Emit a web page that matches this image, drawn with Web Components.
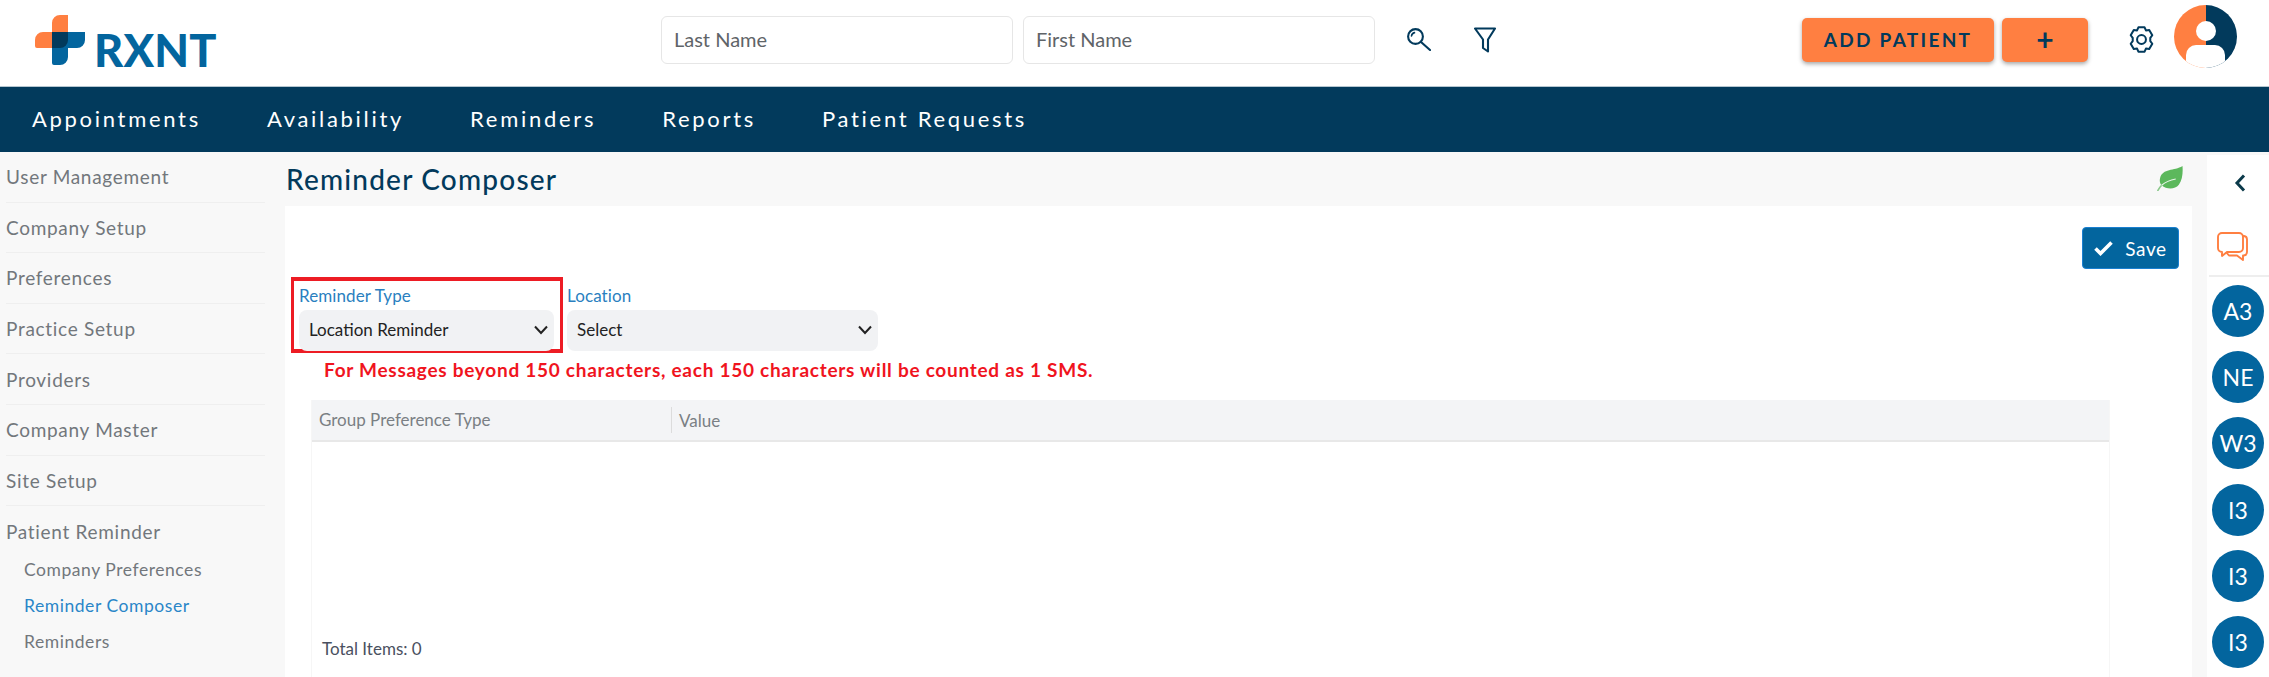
<!DOCTYPE html>
<html lang="en">
<head>
<meta charset="utf-8">
<title>Reminder Composer</title>
<style>
  html, body { margin: 0; height: 677px; overflow: hidden; background: #f8f8f8; }
  body { font-family: "Lato", "Open Sans", sans-serif; color: #333; }
</style>
</head>
<body>
<rx-header></rx-header>
<rx-nav>
  <a>Appointments</a><a>Availability</a><a>Reminders</a><a>Reports</a><a>Patient Requests</a>
</rx-nav>
<rx-workspace>
  <rx-sidebar slot="left">
    <rx-side-item>User Management</rx-side-item>
    <rx-side-item>Company Setup</rx-side-item>
    <rx-side-item>Preferences</rx-side-item>
    <rx-side-item>Practice Setup</rx-side-item>
    <rx-side-item>Providers</rx-side-item>
    <rx-side-item>Company Master</rx-side-item>
    <rx-side-item>Site Setup</rx-side-item>
    <rx-side-item last>Patient Reminder</rx-side-item>
    <rx-side-item sub>Company Preferences</rx-side-item>
    <rx-side-item sub active>Reminder Composer</rx-side-item>
    <rx-side-item sub>Reminders</rx-side-item>
  </rx-sidebar>
  <rx-composer slot="main"></rx-composer>
  <rx-rail slot="right">
    <rx-badge>A3</rx-badge>
    <rx-badge>NE</rx-badge>
    <rx-badge>W3</rx-badge>
    <rx-badge>I3</rx-badge>
    <rx-badge>I3</rx-badge>
    <rx-badge>I3</rx-badge>
  </rx-rail>
</rx-workspace>

<script>
const tplHeader = document.createElement('template');
tplHeader.innerHTML = `
  <style>
    :host { display: flex; align-items: center; height: 86px; background: #fff; box-sizing: border-box; padding: 0 0 7px 35px; }
    .logo { display: flex; align-items: flex-start; width: 626px; height: 50px; gap: 9px; }
    .logo svg { display: block; flex: none; }
    .logo b { font-size: 45px; line-height: 50px; font-weight: 900; color: #03659e; letter-spacing: .2px; margin-top: 10px; }
    input {
      width: 352px; height: 48px; box-sizing: border-box; border: 1px solid #e6e6e6; border-radius: 6px;
      padding: 0 12px 2px; font: 20px "Lato", sans-serif; color: #555; background: #fff; outline: none;
    }
    input::placeholder { color: #5f6468; opacity: 1; }
    input + input { margin-left: 10px; }
    .tool { display: block; flex: none; }
    .btn {
      display: flex; align-items: center; justify-content: center; height: 44px; box-sizing: border-box;
      background: #ff7f41; border-radius: 5px; box-shadow: 0 2px 4px rgba(0,0,0,.35);
      color: #023a5c; font-size: 19px; font-weight: 700; letter-spacing: 2.3px;
    }
    .avatar { display: block; flex: none; margin-left: 19px; margin-top: -6px; }
  </style>
  <div class="logo">
    <svg width="50" height="50" viewBox="0 0 50 50">
      <path d="M17 8a8 8 0 0 1 8-8h8v33H2a2 2 0 0 1-2-2v-6a8 8 0 0 1 8-8h9z" fill="#ff7f41"/>
      <path d="M17 17h33v8a8 8 0 0 1-8 8h-9v9a8 8 0 0 1-8 8h-6a2 2 0 0 1-2-2z" fill="#03659e"/>
      <path d="M17 17h16v8a8 8 0 0 1-8 8h-8z" fill="#023a5c"/>
    </svg>
    <b>RXNT</b>
  </div>
  <input placeholder="Last Name"><input placeholder="First Name">
  <svg class="tool" style="margin-left:32px" width="24" height="23" viewBox="0 0 24 23" fill="none" stroke="#023a5c" stroke-width="2.1" stroke-linecap="round">
    <circle cx="8.5" cy="8.5" r="7.4"/><path d="M14 14l9 8"/><path d="M4.5 8a4 4 0 0 1 3-3.4" stroke-width="1.6"/>
  </svg>
  <svg class="tool" style="margin-left:43px" width="22" height="26" viewBox="0 0 22 26" fill="none" stroke="#023a5c" stroke-width="2.1" stroke-linejoin="round">
    <path d="M1 1.5h20l-7 11v12l-5-3.5v-8.500z"/>
  </svg>
  <div class="btn" style="width:192px;margin-left:306px">ADD PATIENT</div>
  <div class="btn" style="width:86px;margin-left:8px;padding-bottom:2px;font-size:30px;letter-spacing:0">+</div>
  <svg class="tool" style="margin-left:40px" width="27" height="27" viewBox="-14 -14 28 28" fill="none" stroke="#023a5c" stroke-width="2.1" stroke-linejoin="round">
    <circle r="4.6"/>
    <path d="M-3.2-12.600h6.400l1.400 3.200 3.400-.5 3.200 5.500-2.100 2.800 0 3.200 2.100 2.800-3.200 5.500-3.400-.5-1.400 3.200h-6.400l-1.400-3.200-3.400.5-3.200-5.500 2.100-2.800v-3.200l-2.100-2.800 3.200-5.500 3.400.5z"/>
  </svg>
  <svg class="avatar" width="63" height="63" viewBox="0 0 63 63">
    <clipPath id="c"><circle cx="31.5" cy="31.5" r="31.5"/></clipPath>
    <g clip-path="url(#c)">
      <rect width="32" height="63" fill="#ff7f41"/><rect x="32" width="31" height="63" fill="#023a5c"/>
      <circle cx="32" cy="26" r="10" fill="#fff"/>
      <rect x="12" y="40" width="39" height="30" rx="10" fill="#fff"/>
    </g>
  </svg>
`;

class RxHeader extends HTMLElement {
  constructor() {
    super();
    this.attachShadow({ mode: 'open' }).appendChild(tplHeader.content.cloneNode(true));
  }
}
customElements.define('rx-header', RxHeader);

const tplNav = document.createElement('template');
tplNav.innerHTML = `
  <style>
    :host {
      display: flex; align-items: center; gap: 66px; height: 66px; box-sizing: border-box; padding: 0 0 3px 32px;
      background: #023a5c; border-top: 1px solid #b5c6d0; color: #fff;
      font-size: 22px; letter-spacing: 2.7px; white-space: nowrap;
    }
  </style>
  <slot></slot>
`;

class RxNav extends HTMLElement {
  constructor() {
    super();
    this.attachShadow({ mode: 'open' }).appendChild(tplNav.content.cloneNode(true));
  }
}
customElements.define('rx-nav', RxNav);

const tplWorkspace = document.createElement('template');
tplWorkspace.innerHTML = `
  <style>
    :host { display: grid; grid-template-columns: 285px 1907px 77px; height: 525px; background: #f8f8f8; }
    ::slotted([slot="right"]) { margin-left: 15px; }
  </style>
  <slot name="left"></slot>
  <slot name="main"></slot>
  <slot name="right"></slot>
`;

class RxWorkspace extends HTMLElement {
  constructor() {
    super();
    this.attachShadow({ mode: 'open' }).appendChild(tplWorkspace.content.cloneNode(true));
  }
}
customElements.define('rx-workspace', RxWorkspace);

const tplSidebar = document.createElement('template');
tplSidebar.innerHTML = `
  <style>
    :host { display: block; padding: 0 20px 0 6px; }
  </style>
  <slot></slot>
`;

class RxSidebar extends HTMLElement {
  constructor() {
    super();
    this.attachShadow({ mode: 'open' }).appendChild(tplSidebar.content.cloneNode(true));
  }
}
customElements.define('rx-sidebar', RxSidebar);

const tplSideItem = document.createElement('template');
tplSideItem.innerHTML = `
  <style>
    :host {
      display: flex; align-items: center; height: 50.6px; box-sizing: border-box; border-bottom: 1px solid #efefef;
      color: #72777c; font-size: 19px; letter-spacing: .7px; white-space: nowrap;
    }
    :host([last]) { height: 45.5px; padding-top: 6px; border-bottom: 0; }
    :host([sub]) { height: 36px; border-bottom: 0; padding-left: 18px; font-size: 17.5px; letter-spacing: .55px; }
    :host([active]) { color: #2a86c8; }
  </style>
  <slot></slot>
`;

class RxSideItem extends HTMLElement {
  constructor() {
    super();
    this.attachShadow({ mode: 'open' }).appendChild(tplSideItem.content.cloneNode(true));
  }
}
customElements.define('rx-side-item', RxSideItem);

const tplSelect = document.createElement('template');
tplSelect.innerHTML = `
  <style>
    :host { display: block; }
    label { display: block; height: 27px; line-height: 26px; font-size: 17px; letter-spacing: .1px; color: #2a7fbf; }
    .box {
      display: flex; align-items: center; justify-content: space-between; height: 41px; box-sizing: border-box;
      padding: 0 5px 2px 10px; background: #f1f2f4; border-radius: 8px; font-size: 17px; color: #222;
    }
    svg { display: block; }
  </style>
  <label></label>
  <div class="box">
    <span></span>
    <svg width="16" height="10" viewBox="0 0 16 10" fill="none" stroke="#222" stroke-width="2"><path d="M2 1.5l6 6.5 6-6.5"/></svg>
  </div>
`;

class RxSelect extends HTMLElement {
  constructor() {
    super();
    this.attachShadow({ mode: 'open' }).appendChild(tplSelect.content.cloneNode(true));
  }

  connectedCallback() {
    this.shadowRoot.querySelector('label').textContent = this.getAttribute('label');
    this.shadowRoot.querySelector('span').textContent = this.getAttribute('value');
  }
}
customElements.define('rx-select', RxSelect);

const tplComposer = document.createElement('template');
tplComposer.innerHTML = `
  <style>
    :host { display: flex; flex-direction: column; height: 525px; }
    .title { display: flex; align-items: center; justify-content: space-between; flex: none; height: 54px; padding: 0 9px 0 1px; }
    .title svg { margin-top: -2px; }
    h1 { margin: 0; font-size: 28px; font-weight: 500; letter-spacing: 1.2px; color: #023a5c; }
    .card { flex: 1; display: flex; flex-direction: column; min-height: 0; background: #fff; padding: 21px 13px 0 6px; }
    .actions { display: flex; justify-content: flex-end; }
    .save {
      display: flex; align-items: center; justify-content: center; gap: 12px; width: 97px; height: 42px; box-sizing: border-box;
      background: #03659e; border: 1px solid #1a7fd0; border-radius: 4px; color: #fff; font-size: 19px; letter-spacing: .6px;
    }
    .form { display: flex; margin-top: 8px; }
    .marked { width: 272px; height: 76px; box-sizing: border-box; border: solid #ed1c24; border-width: 4px 3px; padding: 2px 6px 0 5px; }
    .plain { width: 311px; margin-left: 4px; padding-top: 6px; }
    .note { margin: 0 0 0 33px; height: 34px; line-height: 34px; font-size: 19px; font-weight: 700; letter-spacing: .73px; color: #f0141e; white-space: nowrap; }
    .table { flex: 1; display: flex; flex-direction: column; width: 1799px; margin: 13px 0 0 20px; border: solid #f6f6f6; border-width: 0 1px; box-sizing: border-box; }
    .head { display: flex; align-items: center; flex: none; height: 40px; background: #f3f4f6; border-bottom: 2px solid #e8e8e8; font-size: 17px; color: #7a7f84; }
    .head div { padding-left: 7px; }
    .head div:first-child { width: 352px; height: 26px; line-height: 26px; border-right: 1px solid #dcdcdc; }
    .total { margin-top: auto; padding: 0 0 18px 10px; font-size: 17px; color: #4a5060; }
    .body { flex: 1; display: flex; flex-direction: column; }
  </style>
  <div class="title">
    <h1>Reminder Composer</h1>
    <svg width="26" height="25" viewBox="0 0 24 24" fill="none">
      <path d="M24 0C16 5 5 2 2.500 11.500c-.8 3 0 5.500 1.500 7 4.500 4 12.500 4.500 16.500-.5C24 13.500 24.500 6 24 0z" fill="#5cb85c"/>
      <path d="M0 24c1-1.500 2-3.500 4-5.500" stroke="#8cc98c" stroke-width="1.6"/>
      <path d="M4 18.500C8 15 12 13.500 17.500 12.500" stroke="#eaf5ea" stroke-width="1.100"/>
    </svg>
  </div>
  <div class="card">
    <div class="actions">
      <div class="save">
        <svg width="19" height="15" viewBox="0 0 19 15" fill="none" stroke="#fff" stroke-width="3.6"><path d="M1.5 7.5l5 5 11-11"/></svg>
        <span>Save</span>
      </div>
    </div>
    <div class="form">
      <div class="marked"><rx-select label="Reminder Type" value="Location Reminder"></rx-select></div>
      <div class="plain"><rx-select label="Location" value="Select"></rx-select></div>
    </div>
    <div class="note">For Messages beyond 150 characters, each 150 characters will be counted as 1 SMS.</div>
    <div class="table">
      <div class="head"><div>Group Preference Type</div><div>Value</div></div>
      <div class="body"><div class="total">Total Items: 0</div></div>
    </div>
  </div>
`;

class RxComposer extends HTMLElement {
  constructor() {
    super();
    this.attachShadow({ mode: 'open' }).appendChild(tplComposer.content.cloneNode(true));
  }
}
customElements.define('rx-composer', RxComposer);

const tplRail = document.createElement('template');
tplRail.innerHTML = `
  <style>
    :host { display: flex; flex-direction: column; align-items: center; width: 62px; margin-top: 3px; background: #fff; }
    .top { display: flex; flex-direction: column; align-self: stretch; flex: none; height: 122px; margin-left: 2px; border-bottom: 2px solid #eee; box-sizing: border-box; }
    .back { display: block; margin: 19px 0 0 25px; }
    .chat { display: block; margin: 40px 0 0 8px; }
    .list { display: flex; flex-direction: column; gap: 14.2px; margin-top: 8px; }
  </style>
  <div class="top">
    <svg class="back" width="12" height="18" viewBox="0 0 12 18" fill="none" stroke="#0b3a4a" stroke-width="3"><path d="M10 1.5L3 9l7 7.5"/></svg>
    <svg class="chat" width="31" height="29" viewBox="0 0 31 29" fill="none" stroke="#ff7f41" stroke-width="1.9" stroke-linejoin="round">
      <path d="M5 1h17a4 4 0 0 1 4 4v11a4 4 0 0 1-4 4H10l-5 4v-4a4 4 0 0 1-4-4V5a4 4 0 0 1 4-4z"/>
      <path d="M26 4h1a3.500 3.500 0 0 1 3 3.500V20a3.500 3.500 0 0 1-3 3.500h-1V28l-6-4.500h-8l-3-3.500"/>
    </svg>
  </div>
  <div class="list"><slot></slot></div>
`;

class RxRail extends HTMLElement {
  constructor() {
    super();
    this.attachShadow({ mode: 'open' }).appendChild(tplRail.content.cloneNode(true));
  }
}
customElements.define('rx-rail', RxRail);

const tplBadge = document.createElement('template');
tplBadge.innerHTML = `
  <style>
    :host {
      display: flex; align-items: center; justify-content: center; width: 52px; height: 52px; border-radius: 50%;
      background: #03659e; color: #fff; font-size: 23px;
    }
  </style>
  <slot></slot>
`;

class RxBadge extends HTMLElement {
  constructor() {
    super();
    this.attachShadow({ mode: 'open' }).appendChild(tplBadge.content.cloneNode(true));
  }
}
customElements.define('rx-badge', RxBadge);
</script>
</body>
</html>
